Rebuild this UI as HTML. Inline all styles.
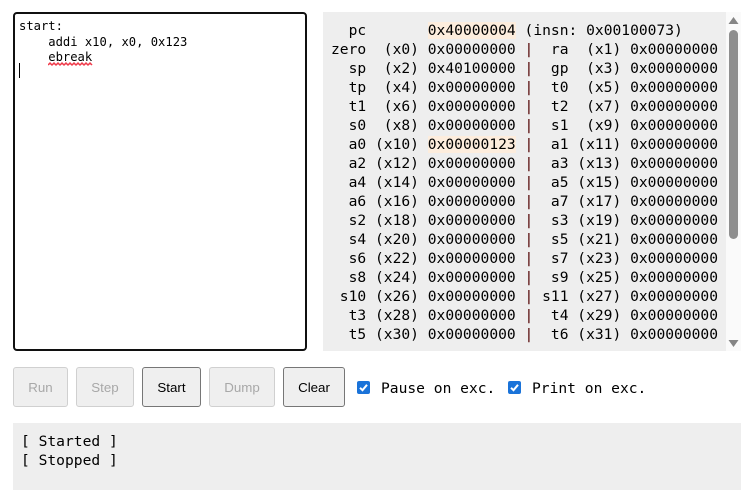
<!DOCTYPE html>
<html><head><meta charset="utf-8"><style>
html,body{margin:0;padding:0;background:#fff;width:755px;height:490px;overflow:hidden}
.a{position:absolute;box-sizing:border-box}
pre{margin:0;font-family:"DejaVu Sans Mono","Liberation Mono",monospace;white-space:pre;color:#000}
#ed{left:13px;top:12px;width:294px;height:339px;border:2px solid #101010;border-radius:4px;background:#fff}
#edt{left:19px;top:19px;font-size:12.17px;line-height:15.5px}
#caret{left:19px;top:63px;width:1px;height:15px;background:#000}
#wave{left:48px;top:61px}
#regs{left:323px;top:12px;width:403px;height:339px;background:#eee}
#sb{left:726px;top:12px;width:15px;height:339px;background:#fafafa}
#th{left:729px;top:30px;width:9px;height:209px;background:#8f8f8f;border-radius:5px}
#rt{left:331px;top:21px;font-size:14.61px;line-height:19px}
#rt b{font-weight:normal;background:#fdeddd}
#rt i{font-style:normal;color:#500000}
.btn{top:367px;height:40px;border:1px solid #767676;border-radius:3px;background:#efefef;font:13.33px/40px "Liberation Sans",Arial,sans-serif;text-align:center;color:#000}
.dis{border-color:#d0d0d0;color:#a8a8a8}
.cb{top:381px;width:13px;height:13px;background:#1a73d9;border-radius:2px}
.lb{top:379px;font-size:14.61px;line-height:19px}
#log{left:13px;top:423px;width:728px;height:67px;background:#eee}
#lt{left:21px;top:432px;font-size:14.61px;line-height:19px}
</style></head><body>
<div class="a" id="ed"></div>
<pre class="a" id="edt">start:
    addi x10, x0, 0x123
    ebreak</pre>
<svg class="a" id="wave" width="45" height="6" viewBox="0 0 45 6"><path d="M0 4 L2 2 L4 4 L6 2 L8 4 L10 2 L12 4 L14 2 L16 4 L18 2 L20 4 L22 2 L24 4 L26 2 L28 4 L30 2 L32 4 L34 2 L36 4 L38 2 L40 4 L42 2 L44 4" fill="none" stroke="#f03a4a" stroke-width="1.5"/></svg>
<div class="a" id="caret"></div>
<div class="a" id="regs"></div>
<div class="a" id="sb"></div>
<div class="a" id="th"></div>
<svg class="a" style="left:726px;top:12px" width="15" height="339" viewBox="0 0 15 339"><path d="M2.5 12 L12.5 12 L7.5 5 Z M2.5 328 L12.5 328 L7.5 335 Z" fill="#858585"/></svg>
<pre class="a" id="rt">  pc       <b>0x40000004</b> (insn: 0x00100073)
zero  (x0) 0x00000000 <i>|</i>  ra  (x1) 0x00000000
  sp  (x2) 0x40100000 <i>|</i>  gp  (x3) 0x00000000
  tp  (x4) 0x00000000 <i>|</i>  t0  (x5) 0x00000000
  t1  (x6) 0x00000000 <i>|</i>  t2  (x7) 0x00000000
  s0  (x8) 0x00000000 <i>|</i>  s1  (x9) 0x00000000
  a0 (x10) <b>0x00000123</b> <i>|</i>  a1 (x11) 0x00000000
  a2 (x12) 0x00000000 <i>|</i>  a3 (x13) 0x00000000
  a4 (x14) 0x00000000 <i>|</i>  a5 (x15) 0x00000000
  a6 (x16) 0x00000000 <i>|</i>  a7 (x17) 0x00000000
  s2 (x18) 0x00000000 <i>|</i>  s3 (x19) 0x00000000
  s4 (x20) 0x00000000 <i>|</i>  s5 (x21) 0x00000000
  s6 (x22) 0x00000000 <i>|</i>  s7 (x23) 0x00000000
  s8 (x24) 0x00000000 <i>|</i>  s9 (x25) 0x00000000
 s10 (x26) 0x00000000 <i>|</i> s11 (x27) 0x00000000
  t3 (x28) 0x00000000 <i>|</i>  t4 (x29) 0x00000000
  t5 (x30) 0x00000000 <i>|</i>  t6 (x31) 0x00000000</pre>
<div class="a btn dis" style="left:13px;width:55px">Run</div>
<div class="a btn dis" style="left:76px;width:58px">Step</div>
<div class="a btn" style="left:142px;width:59px">Start</div>
<div class="a btn dis" style="left:209px;width:66px">Dump</div>
<div class="a btn" style="left:283px;width:62px">Clear</div>
<div class="a cb" style="left:357px"><svg width="13" height="13" style="display:block"><path d="M3 6.8 L5.5 9.2 L10 3.8" fill="none" stroke="#fff" stroke-width="2"/></svg></div>
<pre class="a lb" style="left:381px">Pause on exc.</pre>
<div class="a cb" style="left:508px"><svg width="13" height="13" style="display:block"><path d="M3 6.8 L5.5 9.2 L10 3.8" fill="none" stroke="#fff" stroke-width="2"/></svg></div>
<pre class="a lb" style="left:532px">Print on exc.</pre>
<div class="a" id="log"></div>
<pre class="a" id="lt">[ Started ]
[ Stopped ]</pre>
</body></html>
